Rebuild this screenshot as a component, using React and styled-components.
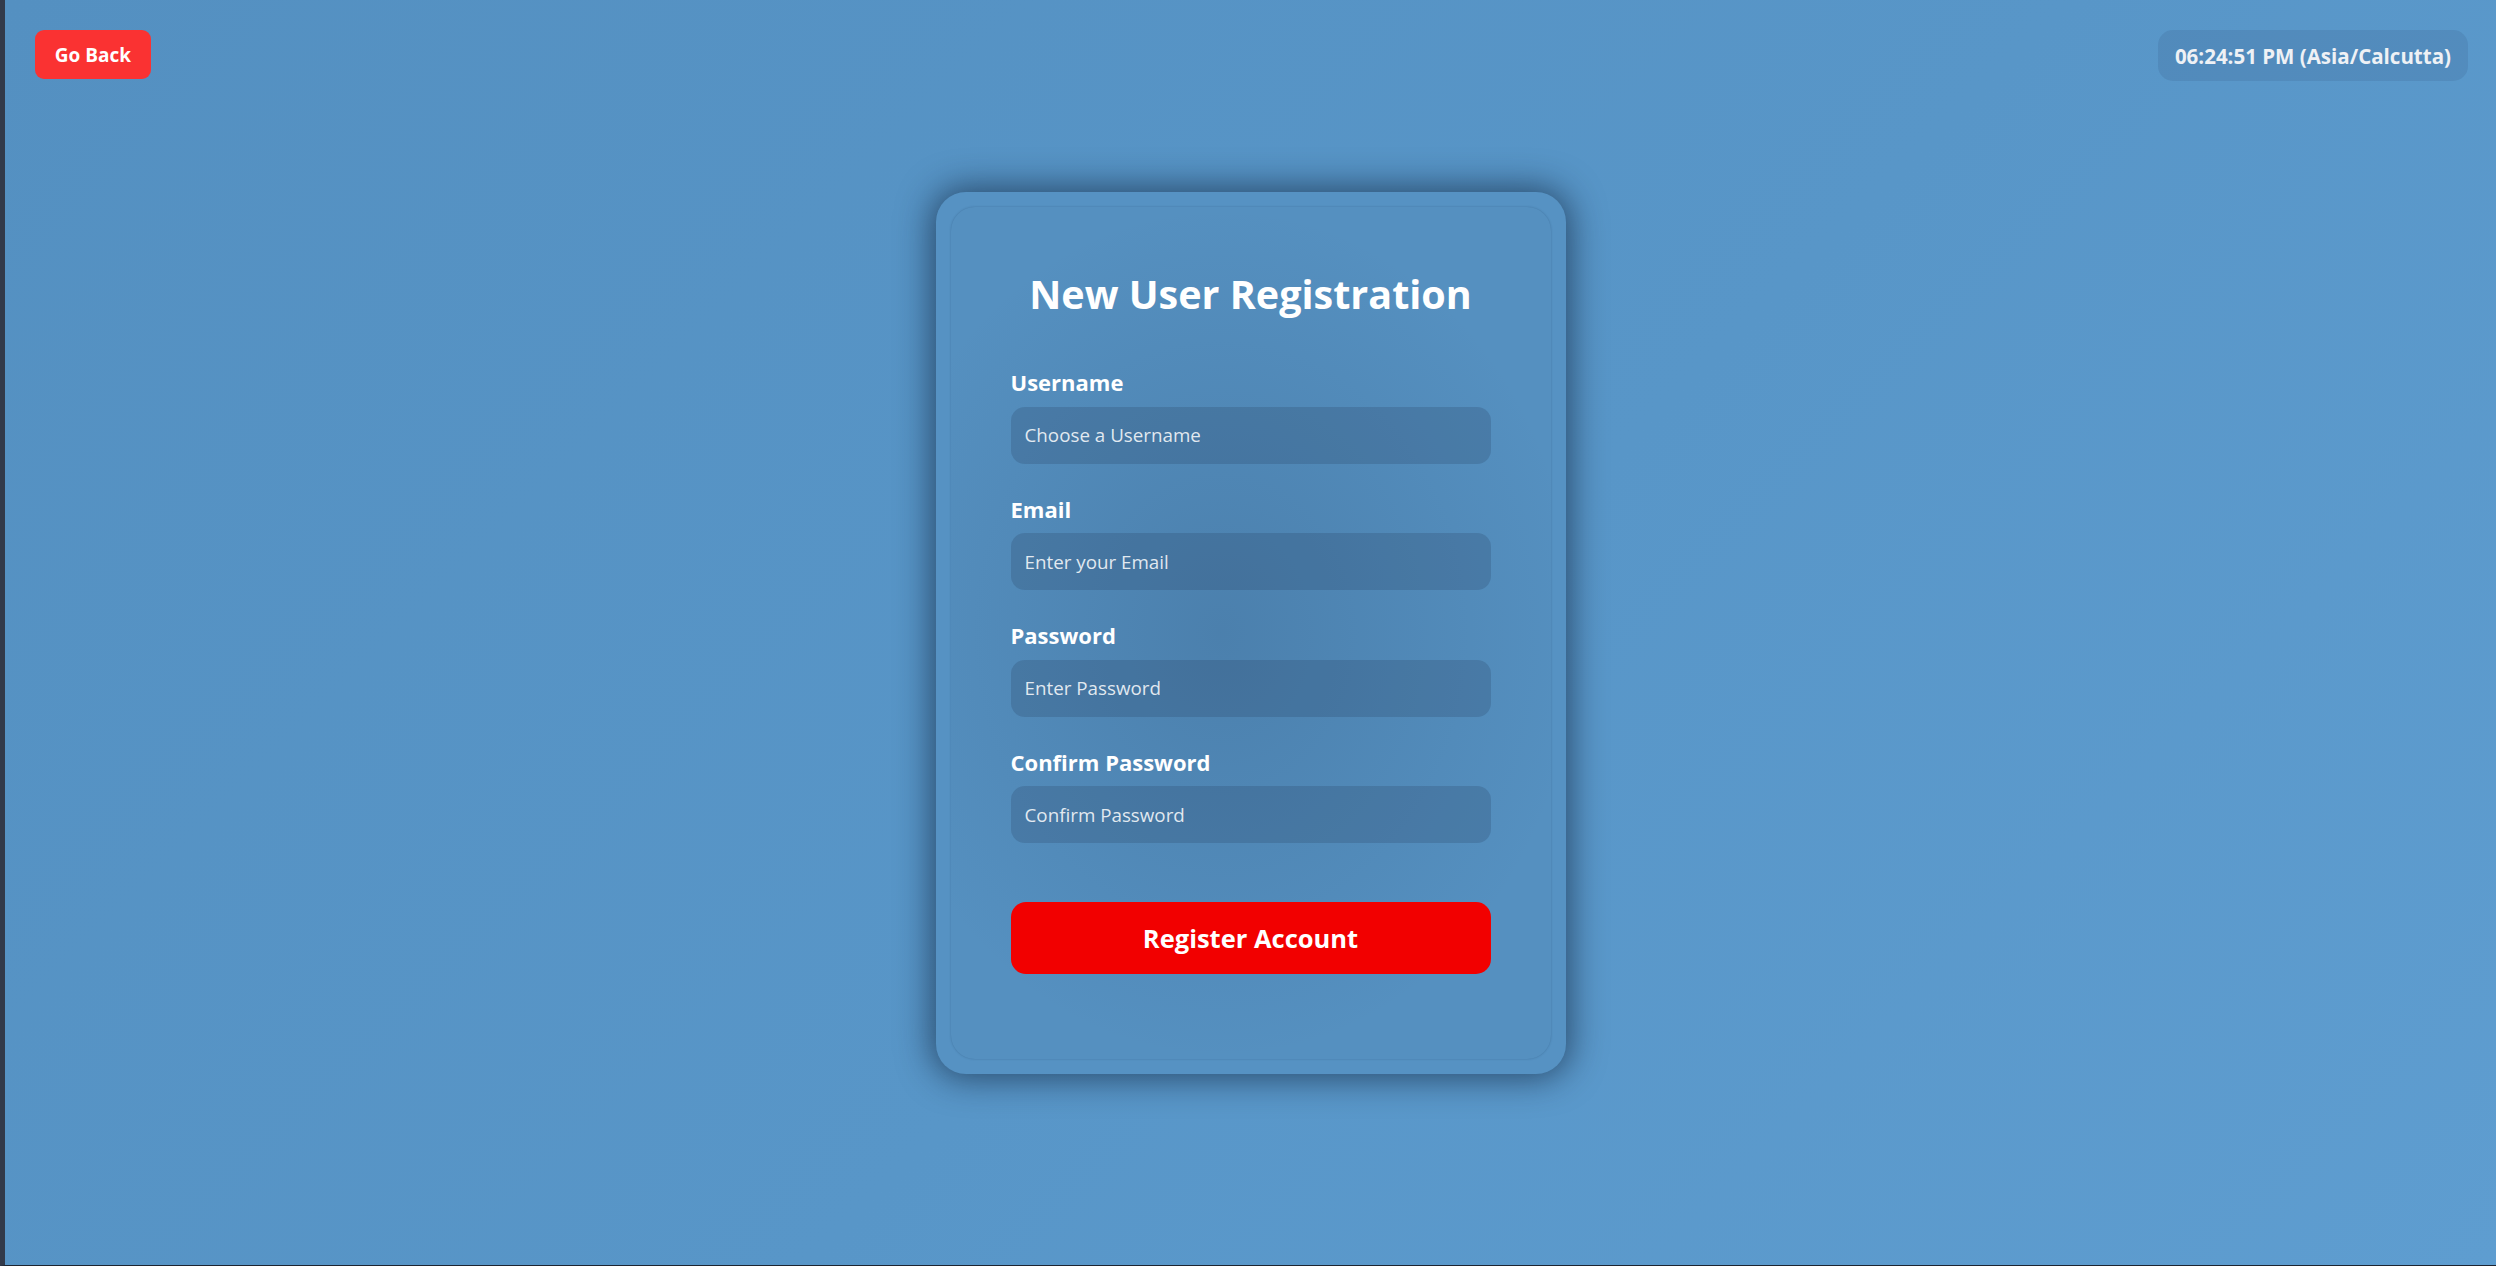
import React, { useState } from 'react';
import styled, { createGlobalStyle } from 'styled-components';

const GlobalStyle = createGlobalStyle`
  * {
    box-sizing: border-box;
  }

  html, body {
    margin: 0;
    padding: 0;
    height: 100%;
    overflow: hidden;
  }

  body {
    font-family: "Open Sans", "Noto Sans", Arial, sans-serif;
    background: #5693c4;
  }
`;

const App = () => {
  const [formValues, setFormValues] = useState({
    username: '',
    email: '',
    password: '',
    confirm: ''
  });

  const handleChange = (e) => {
    setFormValues({ ...formValues, [e.target.name]: e.target.value });
  };

  const fields = [
    { name: 'username', label: 'Username', type: 'text', placeholder: 'Choose a Username' },
    { name: 'email', label: 'Email', type: 'email', placeholder: 'Enter your Email' },
    { name: 'password', label: 'Password', type: 'password', placeholder: 'Enter Password' },
    { name: 'confirm', label: 'Confirm Password', type: 'password', placeholder: 'Confirm Password' }
  ];

  return (
    <>
      <GlobalStyle />
      <Page>
        {/* Top bar */}
        <TopBar>
          <BackButton>Go Back</BackButton>
          <Clock>06:24:51 PM (Asia/Calcutta)</Clock>
        </TopBar>

        {/* Registration card */}
        <CardFrame>
          <CardPanel>
            <Title>New User Registration</Title>
            <Form onSubmit={e => e.preventDefault()}>
              {fields.map(field => (
                <Field key={field.name}>
                  <Label htmlFor={field.name}>{field.label}</Label>
                  <Input
                    id={field.name}
                    name={field.name}
                    type={field.type}
                    placeholder={field.placeholder}
                    value={formValues[field.name]}
                    onChange={handleChange}
                  />
                </Field>
              ))}
              <SubmitButton type="submit">Register Account</SubmitButton>
            </Form>
          </CardPanel>
        </CardFrame>
      </Page>
    </>
  );
};

//Component Styles
const Page = styled.div`
  height: 100vh;
  display: flex;
  flex-direction: column;
  align-items: center;
  border-left: 5px solid #323a4a;
  border-bottom: 1px solid #1d2430;
  background: linear-gradient(135deg, #5490c1 0%, #5896c8 55%, #5e9dd0 100%);
  overflow: hidden;
`;

const TopBar = styled.div`
  width: 100%;
  display: flex;
  justify-content: space-between;
  align-items: flex-start;
  padding: 30px 28px 0 30px;
`;

const BackButton = styled.button`
  width: 116px;
  height: 49px;
  border: none;
  border-radius: 9px;
  background: #fa3232;
  color: #ffffff;
  font-family: inherit;
  font-size: 19px;
  font-weight: 700;
  cursor: pointer;
`;

const Clock = styled.div`
  height: 51px;
  display: flex;
  align-items: center;
  padding: 0 17px;
  border-radius: 15px;
  background: rgba(30, 60, 100, 0.12);
  color: #eef1f5;
  font-size: 20.5px;
  font-weight: 700;
`;

const CardFrame = styled.div`
  margin-top: 111px;
  width: 630px;
  padding: 15px;
  border-radius: 30px;
  background: #5692c3;
  box-shadow: 0 0 34px 4px rgba(12, 28, 50, 0.62);
`;

const CardPanel = styled.div`
  height: 852px;
  padding: 63px 60px 0 60px;
  border-radius: 24px;
  background:
    radial-gradient(ellipse 60% 50% at 45% 50%, rgba(40, 70, 105, 0.22), rgba(40, 70, 105, 0) 100%),
    #5590c0;
  box-shadow: 0 0 2px rgba(30, 60, 95, 0.35);
`;

const Title = styled.h2`
  margin: 0 0 50px 0;
  text-align: center;
  color: #ffffff;
  font-size: 39.5px;
  line-height: 1.25;
  font-weight: 700;
`;

const Form = styled.form`
  display: flex;
  flex-direction: column;
  gap: 32px;
`;

const Field = styled.div`
  display: flex;
  flex-direction: column;
  gap: 10px;
`;

const Label = styled.label`
  color: #ffffff;
  font-size: 22px;
  line-height: 1.25;
  font-weight: 700;
`;

const Input = styled.input`
  width: 100%;
  height: 57px;
  padding: 0 14px;
  border: none;
  border-radius: 14px;
  outline: none;
  background: rgba(35, 60, 90, 0.22);
  color: #ffffff;
  font-family: inherit;
  font-size: 18.8px;

  &::placeholder {
    color: rgba(255, 255, 255, 0.85);
  }
`;

const SubmitButton = styled.button`
  margin-top: 27px;
  width: 100%;
  height: 72px;
  border: none;
  border-radius: 15px;
  background: #f20000;
  color: #ffffff;
  font-family: inherit;
  font-size: 25.5px;
  font-weight: 700;
  cursor: pointer;
`;

export default App;
